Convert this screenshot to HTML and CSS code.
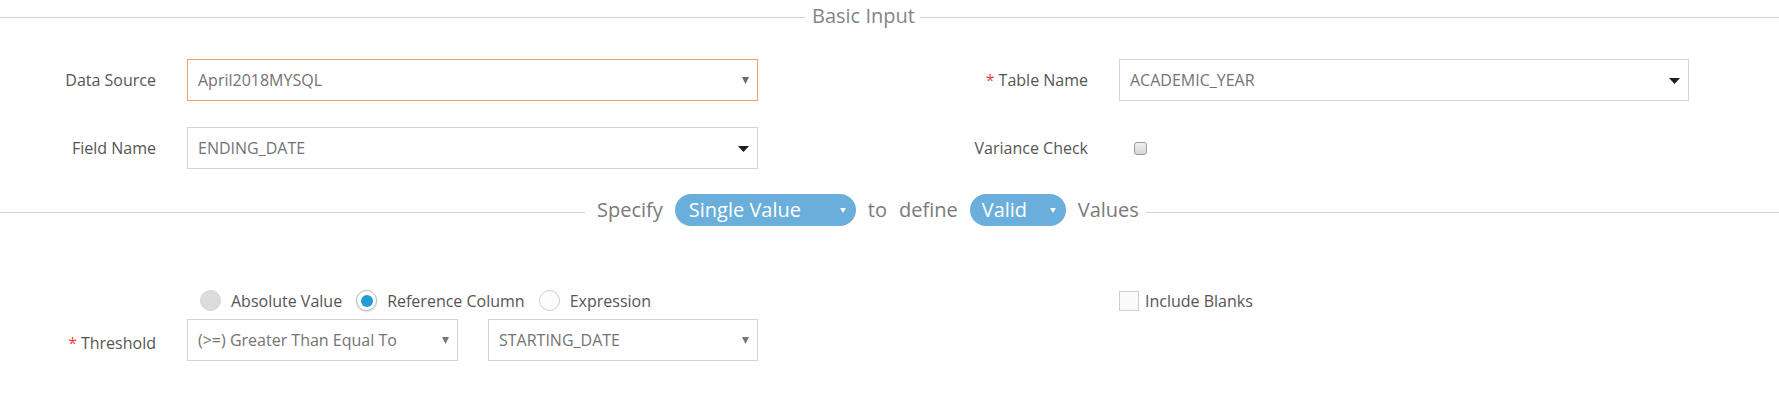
FILE: index.html
```html
<!DOCTYPE html>
<html lang="en">
<head>
<meta charset="utf-8">
<title>Basic Input</title>
<link rel="stylesheet" href="styles.css">
</head>
<body>
<div class="page">
  <div class="legend">
    <span class="rule rule-left"></span>
    <span class="legend-text">Basic Input</span>
    <span class="rule rule-fill"></span>
  </div>

  <div class="form-grid">
    <label class="lbl">Data Source</label>
    <div class="select focused">
      <span class="val">April2018MYSQL</span>
      <svg class="caret" width="7" height="7" viewBox="0 0 7 7"><path d="M0 0H7L3.5 7Z" fill="#6b6b6b"/></svg>
    </div>
    <label class="lbl"><span class="req">*</span> Table Name</label>
    <div class="select">
      <span class="val">ACADEMIC_YEAR</span>
      <svg class="caret caret-lg" width="11" height="6" viewBox="0 0 11 6"><path d="M0 0H11L5.5 6Z" fill="#1f1f1f"/></svg>
    </div>

    <label class="lbl">Field Name</label>
    <div class="select">
      <span class="val">ENDING_DATE</span>
      <svg class="caret caret-lg" width="11" height="6" viewBox="0 0 11 6"><path d="M0 0H11L5.5 6Z" fill="#1f1f1f"/></svg>
    </div>
    <label class="lbl">Variance Check</label>
    <div class="check-cell"><span class="mini-check"></span></div>
  </div>

  <div class="spec-row">
    <span class="rule rule-spec"></span>
    <span class="spec-text">Specify</span>
    <span class="pill pill-wide">Single Value<svg class="pill-caret" width="6" height="5" viewBox="0 0 6 5"><path d="M0 0H6L3 5Z" fill="#fff"/></svg></span>
    <span class="spec-text">to</span>
    <span class="spec-text">define</span>
    <span class="pill pill-narrow">Valid<svg class="pill-caret" width="6" height="5" viewBox="0 0 6 5"><path d="M0 0H6L3 5Z" fill="#fff"/></svg></span>
    <span class="spec-text">Values</span>
    <span class="rule rule-fill rule-tight"></span>
  </div>

  <div class="form-grid thresh-grid">
    <span></span>
    <div class="radios">
      <label class="opt"><span class="radio radio-disabled"></span>Absolute Value</label>
      <label class="opt"><span class="radio radio-on"></span>Reference Column</label>
      <label class="opt"><span class="radio"></span>Expression</label>
    </div>
    <span></span>
    <label class="blanks"><span class="box-check"></span>Include Blanks</label>

    <label class="lbl lbl-low"><span class="req">*</span> Threshold</label>
    <div class="pair">
      <div class="select">
        <span class="val">(&gt;=) Greater Than Equal To</span>
        <svg class="caret" width="7" height="7" viewBox="0 0 7 7"><path d="M0 0H7L3.5 7Z" fill="#777"/></svg>
      </div>
      <div class="select">
        <span class="val">STARTING_DATE</span>
        <svg class="caret" width="7" height="7" viewBox="0 0 7 7"><path d="M0 0H7L3.5 7Z" fill="#777"/></svg>
      </div>
    </div>
  </div>
</div>
</body>
</html>
```

FILE: styles.css
```css
* { box-sizing: border-box; }

html, body {
  margin: 0;
  padding: 0;
  background: #fff;
}

body {
  font-family: "Open Sans", "Liberation Sans", sans-serif;
  font-size: 16px;
  color: #555;
}

.page {
  width: 1779px;
}

/* section header with rule lines */
.legend {
  display: flex;
  align-items: center;
  height: 34px;
}

.rule {
  display: block;
  height: 1px;
  background: #d2d2d2;
}

.rule-left { width: 805px; flex: 0 0 805px; }
.rule-fill { flex: 1 1 auto; }

.legend-text {
  font-size: 20px;
  color: #858585;
  padding: 0 5px 2px 7px;
  line-height: 1;
}

/* form grid */
.form-grid {
  display: grid;
  grid-template-columns: 156px 571px 299px 570px;
  column-gap: 31px;
  row-gap: 26px;
  margin-top: 25px;
  grid-auto-rows: 42px;
}

.lbl {
  display: flex;
  align-items: center;
  justify-content: flex-end;
  color: #555;
  white-space: nowrap;
}

.req {
  color: #e8423c;
  margin-right: 4px;
}

.select {
  height: 42px;
  border: 1px solid #d3d3d3;
  background: #fff;
  display: flex;
  align-items: center;
  justify-content: space-between;
  padding: 0 8px 0 10px;
}

.select.focused {
  border-color: #efa264;
}

.val {
  color: #737373;
  white-space: nowrap;
}

.caret { display: block; margin-top: 1px; }

.check-cell {
  display: flex;
  align-items: center;
  padding-left: 15px;
}

.mini-check {
  display: block;
  width: 13px;
  height: 13px;
  border: 1px solid #9a9a9a;
  border-radius: 3px;
  background: linear-gradient(#f2f2f2, #d6d6d6);
}

/* specify row */
.spec-row {
  display: flex;
  align-items: center;
  gap: 12px;
  height: 32px;
  margin-top: 25px;
}

.rule-spec {
  width: 585px;
  flex: 0 0 585px;
  margin-top: 4px;
}

.rule-tight { margin-left: -5px; margin-top: 4px; }

.spec-text {
  font-size: 20px;
  color: #7a7a7a;
  line-height: 1;
}

.pill {
  height: 32px;
  border-radius: 16px;
  background: #6aaedb;
  color: #fff;
  font-size: 20px;
  display: flex;
  align-items: center;
  justify-content: space-between;
  padding: 0 10px 0 14px;
  line-height: 1;
}

.pill-wide { width: 181px; }
.pill-narrow { width: 96px; padding-left: 12px; }

.pill-caret { display: block; }

/* threshold grid */
.thresh-grid {
  margin-top: 64px;
  grid-auto-rows: auto;
  grid-template-rows: 21px 42px;
  row-gap: 8px;
}

.radios {
  display: flex;
  align-items: center;
  padding-left: 13px;
  gap: 14px;
}

.opt {
  display: inline-flex;
  align-items: center;
  gap: 10px;
  color: #555;
  white-space: nowrap;
}

.radio {
  width: 21px;
  height: 21px;
  border-radius: 50%;
  border: 1px solid #cdcdcd;
  background: #fcfcfc;
  display: flex;
  align-items: center;
  justify-content: center;
}

.radio-disabled {
  background: #dcdcdc;
  border-color: #d4d4d4;
}

.radio-on {
  background: #fff;
  border-color: #b9b9b9;
  box-shadow: 0 1px 2px rgba(0,0,0,0.15);
}

.radio-on::after {
  content: "";
  width: 12px;
  height: 12px;
  border-radius: 50%;
  background: #229cd6;
}

.blanks {
  display: flex;
  align-items: center;
  gap: 6px;
  color: #555;
}

.box-check {
  display: block;
  width: 20px;
  height: 20px;
  border: 1px solid #cfcfcf;
  background: #fafafa;
}

.lbl-low { padding-top: 6px; }

.pair {
  display: flex;
  gap: 30px;
}

.pair .select:first-child { width: 271px; }
.pair .select:last-child { width: 270px; }
```
